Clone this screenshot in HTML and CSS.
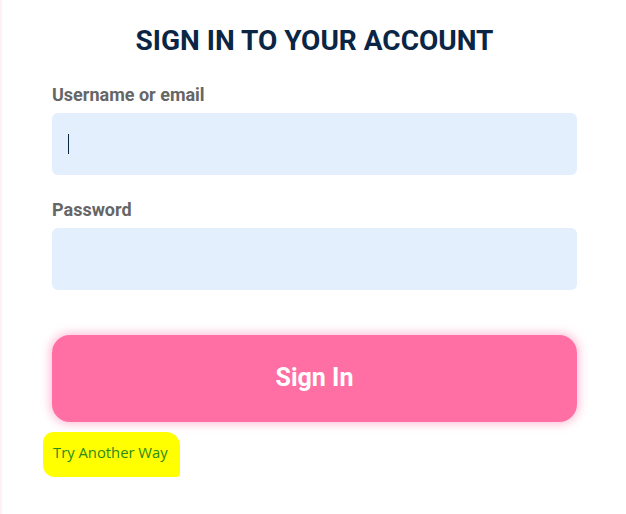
FILE: index.html
```html
<!DOCTYPE html>
<html>
<head>
<meta charset="utf-8">
<link rel="stylesheet" href="styles.css">
</head>
<body>
<div class="page">
  <h1 class="title">SIGN IN TO YOUR ACCOUNT</h1>
  <form class="form">
    <label class="label">Username or email</label>
    <div class="input"><span class="caret"></span></div>
    <label class="label label-pw">Password</label>
    <div class="input"></div>
    <button type="button" class="btn">Sign In</button>
  </form>
  <div class="alt"><span class="alt-link">Try Another Way</span></div>
</div>
</body>
</html>
```

FILE: styles.css
```css
html, body {
  margin: 0;
  padding: 0;
  background: #ffffff;
}
body {
  width: 626px;
  height: 514px;
  overflow: hidden;
}
.page {
  box-sizing: border-box;
  height: 514px;
  border-left: 2px solid #fff0f4;
  padding: 24px 49px 0 50px;
  font-family: Roboto, "Liberation Sans", sans-serif;
}
.title {
  margin: 0;
  text-align: center;
  font-size: 28px;
  line-height: 34px;
  font-weight: 700;
  color: #0b2545;
}
.form {
  display: flex;
  flex-direction: column;
  margin-top: 27px;
}
.label {
  font-size: 18px;
  font-weight: 700;
  line-height: 20px;
  color: #666666;
}
.label-pw {
  margin-top: 25px;
}
.input {
  margin-top: 8px;
  height: 62px;
  background: #e3effd;
  border-radius: 6px;
  display: flex;
  align-items: center;
  padding-left: 16px;
}
.caret {
  width: 1px;
  height: 20px;
  background: #0b2545;
}
.btn {
  margin-top: 45px;
  height: 87px;
  border: none;
  border-radius: 18px;
  background: #ff6fa3;
  box-shadow: 0 0 10px 2px rgba(255, 111, 163, 0.45);
  color: #ffffff;
  font-family: Roboto, "Liberation Sans", sans-serif;
  font-size: 25px;
  font-weight: 700;
  padding: 0 0 2px;
}
.alt {
  margin-top: 10px;
  margin-left: -9px;
}
.alt-link {
  display: inline-block;
  background: #ffff00;
  border-radius: 10px 14px 4px 12px;
  padding: 11px 12px 15px 10px;
  font-family: "Open Sans", "Noto Sans", sans-serif;
  font-size: 14.8px;
  line-height: 19px;
  color: #2a8a1c;
}
```
